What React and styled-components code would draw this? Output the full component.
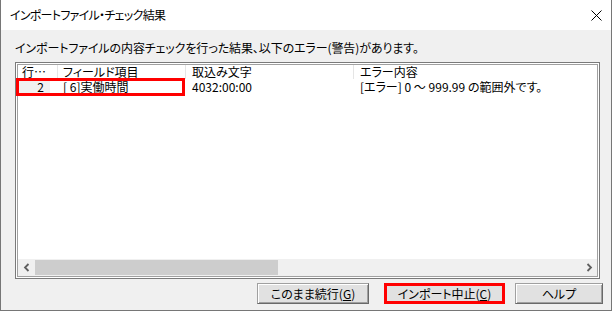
import React from "react";
import styled, { createGlobalStyle } from "styled-components";

const GlobalStyle = createGlobalStyle`
  html, body { margin: 0; padding: 0; background: #f0f0f0; }
  body {
    font-family: "Noto Sans CJK JP", "Noto Sans", sans-serif;
    font-size: 12px;
    color: #000;
  }
  * { box-sizing: border-box; }
`;

const Window = styled.div`
  width: 612px;
  height: 311px;
  display: flex;
  flex-direction: column;
  border: 1px solid #767676;
  border-top: none;
  background: #f0f0f0;
  font-feature-settings: "palt";
`;

const TitleBar = styled.div`
  height: 30px;
  flex: none;
  background: #fff;
  display: flex;
  align-items: center;
  justify-content: space-between;
  padding: 0 9px 0 9px;
`;

const Title = styled.div`
  font-size: 12px;
  line-height: 16px;
  letter-spacing: -0.7px;
  white-space: nowrap;
`;

const CloseIcon = styled.svg`
  width: 11px;
  height: 11px;
  display: block;
`;

const Body = styled.div`
  flex: 1;
  display: flex;
  flex-direction: column;
  padding: 10px 8px 0 14px;
`;

const Message = styled.div`
  height: 16px;
  line-height: 16px;
  letter-spacing: -0.1px;
  white-space: nowrap;
`;

const ListBox = styled.div`
  width: 585px;
  height: 217px;
  margin-top: 6px;
  flex: none;
  border: 1px solid #7a7a7a;
  padding: 1px;
  background: #fff;
`;

const ListInner = styled.div`
  height: 100%;
  border: 1px solid #a0a0a0;
  display: flex;
  flex-direction: column;
  background: #fff;
`;

const columns = "40px 128px 168px 1fr";

const HeaderRow = styled.div`
  display: grid;
  grid-template-columns: ${columns};
  height: 14px;
  flex: none;
  background: #fff;
`;

const HeaderCell = styled.div`
  border-right: ${(p) => (p.$last ? "none" : "1px solid #e5e5e5")};
  padding-left: ${(p) => p.$pad}px;
  height: 14px;
  line-height: 14px;
  white-space: nowrap;
`;

const DataRow = styled.div`
  position: relative;
  display: grid;
  grid-template-columns: ${columns};
  height: 16px;
  flex: none;
`;

const Cell = styled.div`
  padding-left: ${(p) => p.$pad}px;
  line-height: 16px;
  white-space: nowrap;
`;

const NumBox = styled.div`
  width: 32px;
  height: 12px;
  margin-top: 2px;
  background: #f0f0f0;
  text-align: right;
  padding-right: 6px;
  line-height: 12px;
`;

const Highlight = styled.div`
  position: absolute;
  left: -2px;
  top: -1px;
  width: ${(p) => p.$w}px;
  height: ${(p) => p.$h}px;
  border: 3px solid #ff0000;
  pointer-events: none;
`;

const Spacer = styled.div`
  flex: 1;
`;

const HScrollbar = styled.div`
  height: 17px;
  flex: none;
  display: flex;
  background: #f0f0f0;
`;

const ArrowBtn = styled.div`
  width: 17px;
  display: flex;
  align-items: center;
  justify-content: center;
  flex: none;
`;

const Thumb = styled.div`
  width: 243px;
  margin: 1px 0;
  background: #cdcdcd;
`;

const Track = styled.div`
  flex: 1;
`;

const ButtonRow = styled.div`
  display: flex;
  justify-content: flex-end;
  margin-top: 4px;
`;

const Button = styled.button`
  width: ${(p) => p.$w}px;
  height: 21px;
  margin-left: ${(p) => p.$ml}px;
  padding: 0;
  font: inherit;
  font-size: 12px;
  line-height: 1;
  color: #000;
  background: #e1e1e1;
  border: ${(p) => (p.$highlight ? "3px solid #ff0000" : "1px solid")};
  border-color: ${(p) =>
    p.$highlight ? "#ff0000" : "#a0a0a0 #696969 #696969 #a0a0a0"};
  box-shadow: ${(p) =>
    p.$highlight ? "none" : "inset 1px 1px 0 #fff, inset -1px -1px 0 #a0a0a0"};
  display: flex;
  align-items: center;
  justify-content: center;
`;

const U = styled.span`
  text-decoration: underline;
`;

const Chevron = ({ dir }) => (
  <svg width="8" height="9" viewBox="0 0 8 9">
    <polyline
      points={dir === "left" ? "5.5,1 2,4.5 5.5,8" : "2.5,1 6,4.5 2.5,8"}
      fill="none"
      stroke="#606060"
      strokeWidth="1.8"
    />
  </svg>
);

export default function App() {
  return (
    <>
      <GlobalStyle />
      <Window>
        <TitleBar>
          <Title>インポートファイル・チェック結果</Title>
          <CloseIcon viewBox="0 0 11 11">
            <path d="M0.5 0.5 L10.5 10.5 M10.5 0.5 L0.5 10.5" stroke="#000" strokeWidth="1" />
          </CloseIcon>
        </TitleBar>
        <Body>
          <Message>インポートファイルの内容チェックを行った結果、以下のエラー(警告)があります。</Message>
          <ListBox>
            <ListInner>
              <HeaderRow>
                <HeaderCell $pad={4}>行…</HeaderCell>
                <HeaderCell $pad={5}>フィールド項目</HeaderCell>
                <HeaderCell $pad={6}>取込み文字</HeaderCell>
                <HeaderCell $pad={6} $last>エラー内容</HeaderCell>
              </HeaderRow>
              <DataRow>
                <Cell $pad={0}>
                  <NumBox>2</NumBox>
                </Cell>
                <Cell $pad={5}>[ 6]実働時間</Cell>
                <Cell $pad={6}>4032:00:00</Cell>
                <Cell $pad={6}>[エラー] 0 ～ 999.99 の範囲外です。</Cell>
                <Highlight $w={169} $h={18} />
              </DataRow>
              <Spacer />
              <HScrollbar>
                <ArrowBtn>
                  <Chevron dir="left" />
                </ArrowBtn>
                <Thumb />
                <Track />
                <ArrowBtn>
                  <Chevron dir="right" />
                </ArrowBtn>
              </HScrollbar>
            </ListInner>
          </ListBox>
          <ButtonRow>
            <Button $w={112} $ml={0}>
              このまま続行(<U>G</U>)
            </Button>
            <Button $w={121} $ml={15} $highlight>
              インポート中止(<U>C</U>)
            </Button>
            <Button $w={88} $ml={10}>
              ヘルプ
            </Button>
          </ButtonRow>
        </Body>
      </Window>
    </>
  );
}
